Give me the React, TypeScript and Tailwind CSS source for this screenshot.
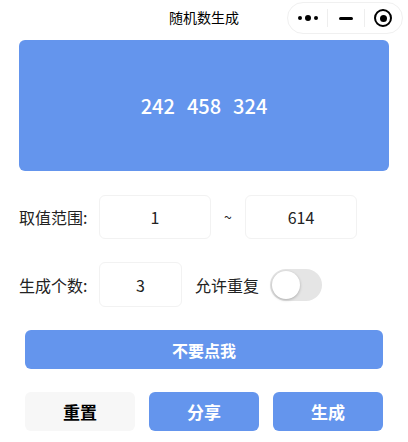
const font = { fontFamily: '"Noto Sans CJK SC", "Noto Sans", sans-serif' };

function Capsule() {
  return (
    <div className="flex h-[32px] w-[116px] items-center rounded-full border border-[#f0f0f0] bg-white">
      <div className="flex w-[40px] items-center justify-center gap-[3px]">
        <span className="h-[4px] w-[4px] rounded-full bg-black" />
        <span className="h-[6px] w-[6px] rounded-full bg-black" />
        <span className="h-[4px] w-[4px] rounded-full bg-black" />
      </div>
      <div className="h-[18px] w-px bg-[#eeeeee]" />
      <div className="flex w-[36px] items-center justify-center">
        <span className="h-[3px] w-[14px] rounded-sm bg-black" />
      </div>
      <div className="h-[18px] w-px bg-[#eeeeee]" />
      <div className="flex w-[38px] items-center justify-center">
        <span className="flex h-[18px] w-[18px] items-center justify-center rounded-full border-[2px] border-black">
          <span className="h-[7px] w-[7px] rounded-full bg-black" />
        </span>
      </div>
    </div>
  );
}

function Field({ value, width }: { value: string; width: string }) {
  return (
    <div
      className={`flex h-[44px] items-center justify-center rounded-md border border-[#f2f2f2] bg-white text-[16px] text-[#222] ${width}`}
    >
      {value}
    </div>
  );
}

const numbers = [242, 458, 324];

export default function App() {
  return (
    <div className="h-[442px] w-[408px] bg-white text-[#222]" style={font}>
      <div className="relative flex h-[40px] items-center justify-center">
        <span className="mt-[-6px] text-[14px] text-black">随机数生成</span>
        <div className="absolute right-[5px] top-[2px]">
          <Capsule />
        </div>
      </div>

      <div className="mx-[19px] flex h-[131px] items-center justify-center gap-[12px] rounded-md bg-[#6495ED] text-[20px] font-medium text-white">
        {numbers.map((n) => (
          <span key={n}>{n}</span>
        ))}
      </div>

      <div className="ml-[19px] mt-[24px] flex items-center">
        <span className="w-[80px] text-[16px]">取值范围:</span>
        <Field value="1" width="w-[112px]" />
        <span className="w-[34px] text-center text-[14px]">~</span>
        <Field value="614" width="w-[112px]" />
      </div>

      <div className="ml-[19px] mt-[23px] flex items-center">
        <span className="w-[80px] text-[16px]">生成个数:</span>
        <Field value="3" width="w-[83px] h-[45px]" />
        <span className="ml-[13px] text-[16px]">允许重复</span>
        <div className="ml-[11px] flex h-[32px] w-[52px] items-center rounded-full bg-[#e5e5e5] p-[2px]">
          <span className="h-[28px] w-[28px] rounded-full bg-white shadow-[0_1px_3px_rgba(0,0,0,0.25)]" />
        </div>
      </div>

      <div className="mx-[25px] mt-[23px] flex h-[39px] items-center justify-center rounded-md bg-[#6495ED] text-[16px] font-bold text-white">
        不要点我
      </div>

      <div className="ml-[25px] mt-[23px] flex gap-[14px]">
        <div className="flex h-[39px] w-[110px] items-center justify-center rounded-md bg-[#f7f7f7] text-[17px] font-bold text-black">
          重置
        </div>
        <div className="flex h-[39px] w-[110px] items-center justify-center rounded-md bg-[#6495ED] text-[17px] font-bold text-white">
          分享
        </div>
        <div className="flex h-[39px] w-[110px] items-center justify-center rounded-md bg-[#6495ED] text-[17px] font-bold text-white">
          生成
        </div>
      </div>
    </div>
  );
}
